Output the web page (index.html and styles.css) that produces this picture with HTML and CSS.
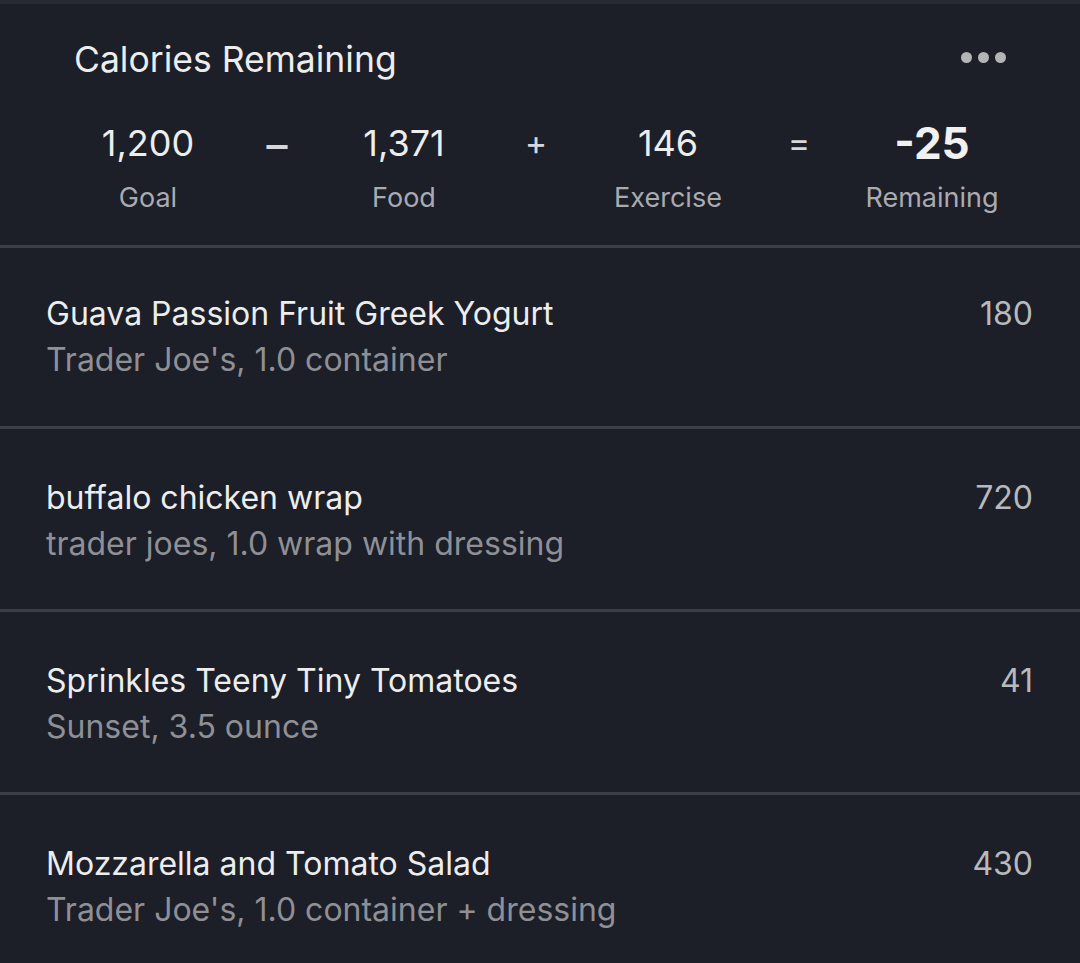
FILE: index.html
```html
<!DOCTYPE html>
<html>
<head>
<meta charset="utf-8">
<link rel="stylesheet" href="styles.css">
</head>
<body>
<div class="topstrip"></div>
<section class="summary">
  <div class="summary-head">
    <h1 class="title">Calories Remaining</h1>
    <div class="more"><span></span><span></span><span></span></div>
  </div>
  <div class="stats">
    <div class="stat"><div class="num">1,200</div><div class="lbl">Goal</div></div>
    <div class="op minus">−</div>
    <div class="stat"><div class="num">1,371</div><div class="lbl">Food</div></div>
    <div class="op">+</div>
    <div class="stat"><div class="num">146</div><div class="lbl">Exercise</div></div>
    <div class="op">=</div>
    <div class="stat"><div class="num total">-25</div><div class="lbl">Remaining</div></div>
  </div>
</section>
<ul class="entries">
  <li class="entry">
    <div class="info"><div class="name">Guava Passion Fruit Greek Yogurt</div><div class="sub">Trader Joe's, 1.0 container</div></div>
    <div class="cal">180</div>
  </li>
  <li class="entry">
    <div class="info"><div class="name">buffalo chicken wrap</div><div class="sub">trader joes, 1.0 wrap with dressing</div></div>
    <div class="cal">720</div>
  </li>
  <li class="entry">
    <div class="info"><div class="name">Sprinkles Teeny Tiny Tomatoes</div><div class="sub">Sunset, 3.5 ounce</div></div>
    <div class="cal">41</div>
  </li>
  <li class="entry">
    <div class="info"><div class="name">Mozzarella and Tomato Salad</div><div class="sub">Trader Joe's, 1.0 container + dressing</div></div>
    <div class="cal">430</div>
  </li>
</ul>
</body>
</html>
```
FILE: styles.css
```css
html, body {
  margin: 0;
  padding: 0;
  background: #1c1e28;
  font-family: Inter, "Noto Sans", "Liberation Sans", sans-serif;
  color: #e9eaec;
  overflow: hidden;
}
.topstrip {
  height: 4px;
  background: #272a35;
}
.summary {
  border-bottom: 3px solid #3b3e49;
  height: 244px;
  box-sizing: border-box;
}
.summary-head {
  display: flex;
  align-items: center;
  justify-content: space-between;
  padding: 36px 74px 0 74px;
  height: 40px;
}
.title {
  margin: 0;
  font-size: 35.5px;
  font-weight: 400;
  line-height: 40px;
  color: #eceded;
}
.more {
  display: flex;
  gap: 6px;
  margin-top: -6px;
}
.more span {
  width: 11px;
  height: 11px;
  border-radius: 50%;
  background: #b3b4b8;
}
.stats {
  display: grid;
  grid-template-columns: 130px 128px 126px 138px 126px 136px 130px;
  padding-left: 83px;
  margin-top: 43px;
}
.stat {
  display: flex;
  flex-direction: column;
  align-items: center;
}
.num {
  font-size: 36px;
  line-height: 40px;
  color: #eceded;
}
.num.total {
  font-weight: 700;
  font-size: 44px;
  color: #f1f1f2;
}
.lbl {
  margin-top: 20px;
  font-size: 27px;
  line-height: 30px;
  color: #a9abb0;
}
.op {
  text-align: center;
  font-size: 34px;
  line-height: 40px;
  color: #d6d7da;
}
.op.minus {
  font-size: 46px;
}
.entries {
  list-style: none;
  margin: 0;
  padding: 0;
}
.entry {
  display: flex;
  justify-content: space-between;
  align-items: flex-start;
  height: 183px;
  box-sizing: border-box;
  padding: 50px 47px 0 46px;
  border-bottom: 3px solid #3b3e49;
}
.entry:first-child {
  height: 181px;
  padding-top: 47px;
}
.name {
  font-size: 32px;
  line-height: 38px;
  color: #eceded;
}
.sub {
  margin-top: 8px;
  font-size: 32px;
  line-height: 38px;
  color: #8e9096;
}
.cal {
  font-size: 32px;
  line-height: 38px;
  color: #b8b9bd;
}
```
